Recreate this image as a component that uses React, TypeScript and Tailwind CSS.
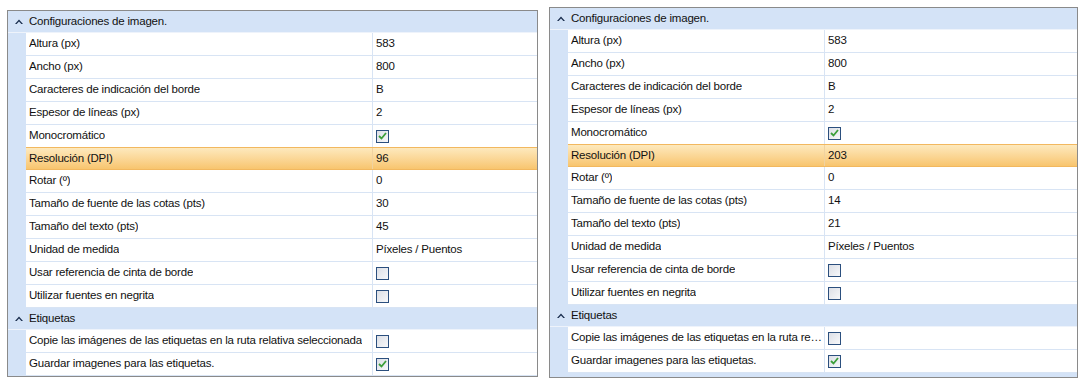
import React from "react";

type Row = { label: string; value?: string; check?: boolean; selected?: boolean };

const font = { fontFamily: "'Liberation Sans', Arial, sans-serif" };

function Chevron() {
  return (
    <svg width="8" height="5" viewBox="0 0 8 5" className="shrink-0">
      <path d="M0 5 L4 0.5 L8 5 L6.3 5 L4 2.6 L1.7 5 Z" fill="#1b2f4f" />
    </svg>
  );
}

function CheckBox({ checked }: { checked?: boolean }) {
  return (
    <div className="w-[13px] h-[13px] border border-[#2b4f7e] bg-gradient-to-br from-[#dcdfe6] to-[#f7f8fa] flex items-center justify-center">
      {checked && (
        <svg width="9" height="8" viewBox="0 0 9 8">
          <path d="M1 4 L3.5 6.5 L8 1" stroke="#3c9f3a" strokeWidth="1.8" fill="none" />
        </svg>
      )}
    </div>
  );
}

function Header({ title }: { title: string }) {
  return (
    <div className="h-[22px] flex items-center pl-[7px] gap-[6px] bg-[#d4e3f7] border-b border-[#eef3fb]">
      <Chevron />
      <span className="text-[11.5px] tracking-[-0.2px] text-[#111]">{title}</span>
    </div>
  );
}

function PropRow({ row, labelW }: { row: Row; labelW: string }) {
  const sel = row.selected;
  return (
    <div
      className={
        sel
          ? "flex h-[23px] border-b border-t border-[#f2b85f] bg-gradient-to-b from-[#fde9bd] to-[#f8c56e] -mt-px"
          : "flex h-[23px] border-b border-[#d8e4f4] bg-white"
      }
    >
      <div
        className={`${labelW} shrink-0 flex items-center pl-[3px] border-r ${
          sel ? "border-[#f0d2a0]" : "border-[#d8e4f4]"
        } overflow-hidden`}
      >
        <span className="truncate text-[11.5px] tracking-[-0.2px] text-[#111]">{row.label}</span>
      </div>
      <div className="flex-1 flex items-center pl-[3px]">
        {row.check !== undefined ? (
          <CheckBox checked={row.check} />
        ) : (
          <span className="text-[11.5px] tracking-[-0.2px] text-[#111]">{row.value}</span>
        )}
      </div>
    </div>
  );
}

function Panel({
  imgRows,
  labelRows,
  labelW,
  className,
  extra,
}: {
  imgRows: Row[];
  labelRows: Row[];
  labelW: string;
  className: string;
  extra?: boolean;
}) {
  return (
    <div className={`border border-[#8a8a8a] bg-[#d4e3f7] ${className}`}>
      <Header title="Configuraciones de imagen." />
      <div className="ml-[18px]">
        {imgRows.map((r) => (
          <PropRow key={r.label} row={r} labelW={labelW} />
        ))}
      </div>
      <Header title="Etiquetas" />
      <div className="ml-[18px]">
        {labelRows.map((r) => (
          <PropRow key={r.label} row={r} labelW={labelW} />
        ))}
      </div>
      {extra && <div className="h-[4px]" />}
    </div>
  );
}

const common = (alto: string, dpi: string, cotas: string, texto: string): Row[] => [
  { label: "Altura (px)", value: alto },
  { label: "Ancho (px)", value: "800" },
  { label: "Caracteres de indicación del borde", value: "B" },
  { label: "Espesor de líneas (px)", value: "2" },
  { label: "Monocromático", check: true },
  { label: "Resolución (DPI)", value: dpi, selected: true },
  { label: "Rotar (º)", value: "0" },
  { label: "Tamaño de fuente de las cotas (pts)", value: cotas },
  { label: "Tamaño del texto (pts)", value: texto },
  { label: "Unidad de medida", value: "Píxeles / Puentos" },
  { label: "Usar referencia de cinta de borde", check: false },
  { label: "Utilizar fuentes en negrita", check: false },
];

const etiquetas: Row[] = [
  { label: "Copie las imágenes de las etiquetas en la ruta relativa seleccionada", check: false },
  { label: "Guardar imagenes para las etiquetas.", check: true },
];

export default function App() {
  return (
    <div className="w-[1082px] h-[384px] bg-white flex items-start" style={font}>
      <Panel
        className="ml-[7px] mt-[10px] w-[531px]"
        imgRows={common("583", "96", "30", "45")}
        labelRows={etiquetas}
        labelW="w-[347px]"
      />
      <Panel
        className="ml-[11px] mt-[7px] w-[529px]"
        imgRows={common("583", "203", "14", "21")}
        labelRows={etiquetas}
        labelW="w-[257px]"
        extra
      />
    </div>
  );
}
